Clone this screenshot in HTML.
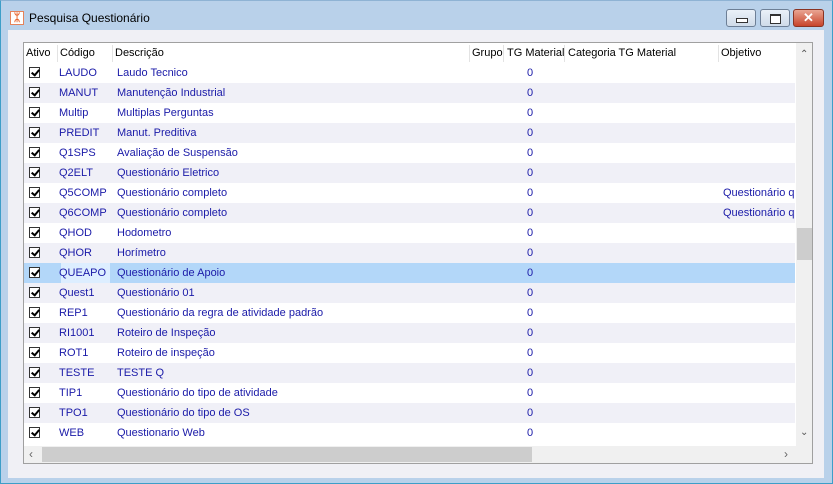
<!DOCTYPE html><html><head><style>
body{margin:0;width:833px;height:484px;overflow:hidden;font-family:"Liberation Sans",sans-serif;}
.win{position:absolute;left:0;top:0;width:831px;height:482px;background:#b9d1ea;border:1px solid #3d9ec8;border-top-color:#8fb3d4;}
.title{position:absolute;left:28px;top:10px;font-size:12px;color:#000;}
.icon{position:absolute;left:9px;top:10px;width:14px;height:14px;background:#fff;border:1px solid #e5835b;box-sizing:border-box;color:#e8642c;font-size:11px;line-height:12px;text-align:center;font-weight:bold}
.btn{position:absolute;top:8px;height:18px;border:1px solid #6d7f96;border-radius:3px;box-sizing:border-box;background:linear-gradient(#eaf1f9,#cfdbe9);}
.client{position:absolute;left:7px;top:29px;width:816px;height:448px;background:#f0f0f5;}
.grid{position:absolute;left:22px;top:41px;width:790px;height:422px;background:#fff;border:1px solid #a0a0a0;box-sizing:border-box;overflow:hidden;font-size:11px;}
.hdr{position:absolute;top:0;height:20px;line-height:20px;color:#000;}
.sep{position:absolute;top:2px;width:1px;height:17px;background:#e3e3e3}
.row{position:absolute;left:0;width:771px;height:20px;line-height:20px;color:#1a1aa8;}
.row span{position:absolute;top:0}
.cb{position:absolute;left:5px;top:4px;width:11px;height:11px;border:1px solid #333;box-sizing:border-box;background:#fff;}
.cb:after{content:"";position:absolute;left:3px;top:0px;width:3px;height:6px;border:solid #000;border-width:0 2px 2px 0;transform:rotate(40deg)}
.alt{background:#f0f0f7}
.sel{background:#b3d7f9}
</style></head><body>
<div class="win">
<div class="icon">ᛯ</div>
<div class="title">Pesquisa Questionário</div>
<div class="btn" style="left:725px;width:30px"><div style="position:absolute;left:9px;top:8px;width:10px;height:3px;border:1px solid #333;background:#fff"></div></div>
<div class="btn" style="left:759px;width:30px"><div style="position:absolute;left:9px;top:4px;width:9px;height:7px;border:1px solid #333;border-top-width:2px;background:#fff"></div></div>
<div class="btn" style="left:792px;width:31px;background:linear-gradient(#e9a593,#c8442b);border-color:#8a3323;color:#fff;font-weight:bold;text-align:center;font-size:13px;line-height:15px">✕</div>
<div class="client"></div>
<div class="grid">
<div class="hdr" style="left:2px">Ativo</div><div class="sep" style="left:33px"></div>
<div class="hdr" style="left:36px">Código</div><div class="sep" style="left:88px"></div>
<div class="hdr" style="left:91px">Descrição</div><div class="sep" style="left:445px"></div>
<div class="hdr" style="left:448px">Grupo</div><div class="sep" style="left:479px"></div>
<div class="hdr" style="left:483px">TG Material</div><div class="sep" style="left:540px"></div>
<div class="hdr" style="left:544px">Categoria TG Material</div><div class="sep" style="left:694px"></div>
<div class="hdr" style="left:697px">Objetivo</div>
<div id="rows"></div>
<div style="position:absolute;left:772px;top:0;width:17px;height:403px;background:#f0f0f0"><div style="position:absolute;left:4px;top:6px;font-size:10px;color:#555">⌃</div><div style="position:absolute;left:1px;top:185px;width:15px;height:32px;background:#cdcdcd"></div><div style="position:absolute;left:4px;top:384px;font-size:10px;color:#555">⌄</div></div>
<div style="position:absolute;left:0;top:403px;width:772px;height:17px;background:#f0f0f0"><div style="position:absolute;left:5px;top:1px;color:#666;font-size:12px">‹</div><div style="position:absolute;left:18px;top:1px;width:490px;height:15px;background:#cdcdcd"></div><div style="position:absolute;left:760px;top:1px;color:#666;font-size:12px">›</div></div>
<div style="position:absolute;left:772px;top:403px;width:17px;height:17px;background:#f0f0f0"></div>
</div>
</div>
<script>
var d=[["LAUDO","Laudo Tecnico",""],["MANUT","Manutenção Industrial",""],["Multip","Multiplas Perguntas",""],["PREDIT","Manut. Preditiva",""],["Q1SPS","Avaliação de Suspensão",""],["Q2ELT","Questionário Eletrico",""],["Q5COMP","Questionário completo","Questionário q"],["Q6COMP","Questionário completo","Questionário q"],["QHOD","Hodometro",""],["QHOR","Horímetro",""],["QUEAPO","Questionário de Apoio",""],["Quest1","Questionário 01",""],["REP1","Questionário da regra de atividade padrão",""],["RI1001","Roteiro de Inspeção",""],["ROT1","Roteiro de inspeção",""],["TESTE","TESTE Q",""],["TIP1","Questionário do tipo de atividade",""],["TPO1","Questionário do tipo de OS",""],["WEB","Questionario Web",""]];
var h="";d.forEach(function(r,i){var c=i==10?"sel":(i%2?"alt":"");h+='<div class="row '+c+'" style="top:'+(20+i*20)+'px"><div class="cb"></div>'+(i==10?'<div style="position:absolute;left:37px;top:0;width:49px;height:20px;background:#ddeeff"></div>':'')+'<span style="left:35px">'+r[0]+'</span><span style="left:93px">'+r[1]+'</span><span style="left:503px">0</span><span style="left:699px;white-space:nowrap;width:72px;overflow:hidden">'+r[2]+'</span></div>'});
document.getElementById("rows").innerHTML=h;
</script>
</body></html>
